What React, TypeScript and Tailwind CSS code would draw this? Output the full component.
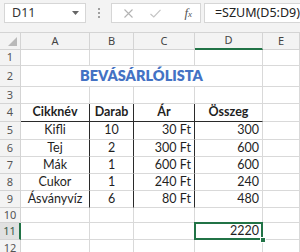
import React from "react";

const G = "border-[#d9d9d9]";

function Hdr({ children, className = "" }: { children?: React.ReactNode; className?: string }) {
  return (
    <div
      className={`flex items-center justify-center bg-[#f3f3f3] text-[#444] text-[11px] border-r border-b border-[#d4d4d4] ${className}`}
      style={{ fontFamily: "'Noto Sans', 'Open Sans', sans-serif" }}
    >
      {children}
    </div>
  );
}

function RowHdr({ n, active = false }: { n: number; active?: boolean }) {
  return (
    <div
      className={`flex items-center justify-center text-[11px] border-b border-[#d4d4d4] ${
        active ? "bg-[#e1e1e1] text-[#3a5a48] border-r-2 border-r-[#217346]" : "bg-[#f3f3f3] text-[#555] border-r"
      }`}
      style={{ fontFamily: "'Noto Sans', 'Open Sans', sans-serif" }}
    >
      {n}
    </div>
  );
}

function C({ children, className = "" }: { children?: React.ReactNode; className?: string }) {
  return (
    <div className={`flex items-center bg-white border-r border-b ${G} text-[12.5px] text-[#1f1f1f] overflow-visible whitespace-nowrap ${className}`}>
      {children}
    </div>
  );
}

const data = [
  ["Kifli", "10", "30 Ft", "300"],
  ["Tej", "2", "300 Ft", "600"],
  ["Mák", "1", "600 Ft", "600"],
  ["Cukor", "1", "240 Ft", "240"],
  ["Ásványvíz", "6", "80 Ft", "480"],
];

export default function App() {
  const TV = "border-r-[1.5px] border-r-[#2a2a2a]";
  return (
    <div className="w-[300px] h-[252px] overflow-hidden bg-[#f3f3f3]" style={{ fontFamily: "Lato, 'Liberation Sans', sans-serif" }}>
      {/* formula bar */}
      <div className="h-[33px] flex items-start pt-[3px] pl-[4px] border-b border-[#d4d4d4]">
        <div
          className="w-[85px] h-[20px] bg-white border border-[#d6d6d6] flex items-center justify-between pl-[7px] pr-[6px] text-[12.5px] text-[#333]"
          style={{ fontFamily: "'Noto Sans', 'Open Sans', sans-serif" }}
        >
          <span>D11</span>
          <svg width="7" height="4" viewBox="0 0 7 4">
            <path d="M0 0 L7 0 L3.5 4 Z" fill="#666" />
          </svg>
        </div>
        <div className="w-[26px] h-[20px] flex flex-col items-center justify-center gap-[2px]">
          <div className="w-[2px] h-[2px] bg-[#a0a0a0]" />
          <div className="w-[2px] h-[2px] bg-[#a0a0a0]" />
          <div className="w-[2px] h-[2px] bg-[#a0a0a0]" />
        </div>
        <div className="w-[93px] h-[20px] bg-white border border-[#d6d6d6] flex items-center">
          <svg className="ml-[12px]" width="9" height="9" viewBox="0 0 9 9">
            <path d="M0.5 0.5 L8.5 8.5 M8.5 0.5 L0.5 8.5" stroke="#b3b3b3" strokeWidth="1.1" />
          </svg>
          <svg className="ml-[17px]" width="11" height="9" viewBox="0 0 11 9">
            <path d="M0.5 5 L3.8 8 L10.5 0.8" stroke="#c4c4c4" strokeWidth="1.2" fill="none" />
          </svg>
          <span
            className="ml-[23px] text-[#555] italic"
            style={{ fontFamily: "'Liberation Serif', serif", fontSize: "13px" }}
          >
            f<span className="text-[9px]">x</span>
          </span>
        </div>
        <div
          className="ml-[3px] flex-1 h-[20px] bg-white border border-[#d6d6d6] border-r-0 flex items-center pl-[10px] text-[12.5px] text-[#222]"
          style={{ fontFamily: "'Noto Sans', 'Open Sans', sans-serif" }}
        >
          =SZUM(D5:D9)
        </div>
      </div>

      {/* sheet */}
      <div className="grid grid-cols-[21px_69px_44px_61px_68px_1fr] grid-rows-[17px_16px_21px_17px_18px_18px_17px_17px_17px_17px_15px_17px_17px]">
        {/* column headers */}
        <Hdr className="relative">
          <svg className="absolute right-[3px] bottom-[3px]" width="9" height="9" viewBox="0 0 9 9">
            <path d="M9 0 L9 9 L0 9 Z" fill="#b9b9b9" />
          </svg>
        </Hdr>
        <Hdr>A</Hdr>
        <Hdr>B</Hdr>
        <Hdr>C</Hdr>
        <Hdr className="bg-[#d2d2d2] border-b-2 border-b-[#217346] text-[#3a5a48]">D</Hdr>
        <Hdr>E</Hdr>

        {/* row 1 */}
        <RowHdr n={1} />
        <C /><C /><C /><C /><C />

        {/* row 2 title */}
        <RowHdr n={2} />
        <div className={`col-span-4 flex items-center justify-center bg-white border-r border-b ${G}`}>
          <span className="font-extrabold text-[#4472c4] text-[14.5px]" style={{ fontFamily: "Lato, 'Liberation Sans', sans-serif" }}>
            BEVÁSÁRLÓLISTA
          </span>
        </div>
        <C />

        {/* row 3 */}
        <RowHdr n={3} />
        <C /><C /><C /><C /><C />

        {/* row 4 header */}
        <RowHdr n={4} />
        <C className={`justify-center font-bold border-b-[1.5px] border-b-[#2a2a2a] ${TV}`}>Cikknév</C>
        <C className={`justify-center font-bold border-b-[1.5px] border-b-[#2a2a2a] ${TV}`}>Darab</C>
        <C className={`justify-center font-bold border-b-[1.5px] border-b-[#2a2a2a] ${TV}`}>Ár</C>
        <C className="justify-center font-bold border-b-[1.5px] border-b-[#2a2a2a]">Összeg</C>
        <C />

        {data.map((r, i) => (
          <React.Fragment key={i}>
            <RowHdr n={5 + i} />
            <C className={`justify-center ${TV}`}>{r[0]}</C>
            <C className={`justify-center ${TV}`}>{r[1]}</C>
            <C className={`justify-end pr-[3px] ${TV}`}>{r[2]}</C>
            <C className="justify-end pr-[3px]">{r[3]}</C>
            <C />
          </React.Fragment>
        ))}

        {/* row 10 */}
        <RowHdr n={10} />
        <C /><C /><C /><C /><C />

        {/* row 11 */}
        <RowHdr n={11} active />
        <C /><C /><C />
        <C className="justify-end pr-[3px] relative">
          2220
          <div className="absolute left-[-1px] top-[-1px] right-[-1px] bottom-[-1px] border-2 border-[#217346]" />
          <div className="absolute right-[-4px] bottom-[-4px] w-[6px] h-[6px] bg-[#217346] border border-white" />
        </C>
        <C />

        {/* row 12 */}
        <RowHdr n={12} />
        <C /><C /><C /><C /><C />
      </div>
    </div>
  );
}
